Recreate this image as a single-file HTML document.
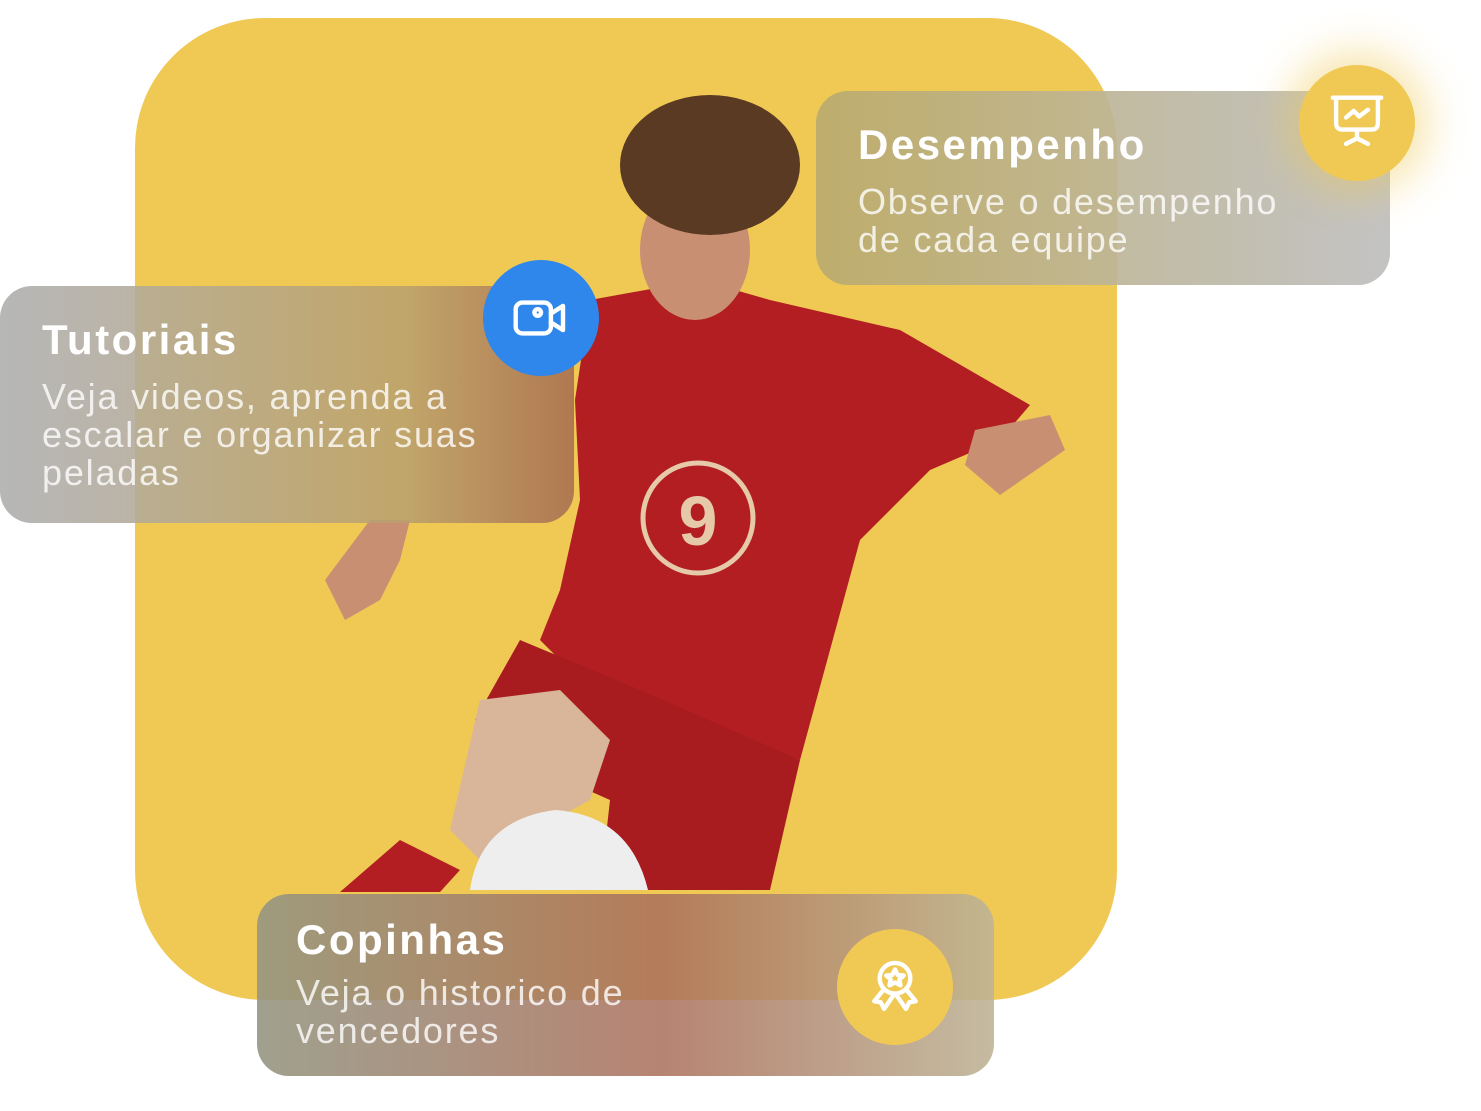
<!DOCTYPE html><html><head><meta charset="utf-8"><style>
body{margin:0;width:1481px;height:1111px;background:#fff;position:relative;overflow:hidden;font-family:"Liberation Sans",sans-serif}
.bg{position:absolute;left:135px;top:18px;width:982px;height:982px;border-radius:130px;background:#F0C955}
.card{position:absolute;border-radius:32px;background:rgba(180,180,180,.82);color:#fff}
.card h2{margin:0;font-size:42px;font-weight:700;letter-spacing:2.5px}
.card p{margin:0;font-size:36px;line-height:38px;color:rgba(255,255,255,.8);letter-spacing:1.8px}
.circ{position:absolute;width:116px;height:116px;border-radius:50%;display:flex;align-items:center;justify-content:center}
</style></head><body>
<div class="bg"></div>
<svg style="position:absolute;left:0;top:0" width="1481" height="1111">
<path d="M590 300 L700 280 L770 300 L900 330 L1030 405 L1000 440 L930 470 L860 540 L800 760 L700 720 L600 700 L540 640 L560 590 L580 500 L575 400 Z" fill="#B21E22"/>
<path d="M520 640 L640 690 L800 760 L770 890 L600 890 L610 800 L520 760 L475 720 Z" fill="#A81C20"/>
<path d="M480 700 L560 690 L610 740 L590 800 L480 860 L450 830 Z" fill="#d9b59a"/>
<path d="M340 892 L400 840 L460 870 L440 892 Z" fill="#B21E22"/>
<path d="M410 520 L370 520 L325 580 L345 620 L380 600 L400 560 Z" fill="#c98f73"/>
<path d="M975 430 L1050 415 L1065 450 L1000 495 L965 465 Z" fill="#c98f73"/>
<ellipse cx="695" cy="250" rx="55" ry="70" fill="#c98f73"/>
<ellipse cx="710" cy="165" rx="90" ry="70" fill="#5a3a22"/>
<path d="M470 890 Q480 820 555 810 Q630 815 648 890 Z" fill="#eee"/>
<circle cx="698" cy="518" r="55" fill="none" stroke="#e6c9a8" stroke-width="5"/>
<text x="698" y="545" text-anchor="middle" font-size="70" font-weight="700" fill="#e6c9a8" font-family="Liberation Sans">9</text>
</svg>
<div class="card" style="left:816px;top:91px;width:574px;height:194px;background:linear-gradient(90deg,rgba(185,170,110,.9),rgba(190,190,190,.92))">
<h2 style="position:absolute;left:42px;top:30px">Desempenho</h2>
<p style="position:absolute;left:42px;top:92px">Observe o desempenho<br>de cada equipe</p></div>
<div class="circ" style="left:1299px;top:65px;background:#F0C955;box-shadow:0 0 40px 15px rgba(240,201,85,.45)">
<svg width="66" height="66" viewBox="0 0 60 60" fill="none" stroke="#fff" stroke-width="4" stroke-linecap="round" stroke-linejoin="round"><path d="M8 7H52M11 7V30Q11 36 17 36H43Q49 36 49 30V7M30 36V44M20 49L30 44L40 49M20 25L27 19L32 24L40 18"/></svg></div>
<div class="card" style="left:0;top:286px;width:574px;height:237px;background:linear-gradient(90deg,rgba(175,175,175,.9),rgba(185,160,110,.85) 70%,rgba(160,100,80,.8))">
<h2 style="position:absolute;left:42px;top:30px">Tutoriais</h2>
<p style="position:absolute;left:42px;top:92px">Veja videos, aprenda a<br>escalar e organizar suas<br>peladas</p></div>
<div class="circ" style="left:483px;top:260px;background:#2F86EB">
<svg width="66" height="66" viewBox="0 0 60 60" fill="none" stroke="#fff" stroke-width="4" stroke-linecap="round" stroke-linejoin="round"><rect x="7" y="16" width="32" height="28" rx="6"/><path d="M39 26L50 19V41L39 34"/><circle cx="27" cy="25" r="3"/></svg></div>
<div class="card" style="left:257px;top:894px;width:737px;height:182px;background:linear-gradient(90deg,rgba(150,150,130,.9),rgba(170,110,90,.85) 55%,rgba(190,180,150,.9))">
<h2 style="position:absolute;left:39px;top:22px">Copinhas</h2>
<p style="position:absolute;left:39px;top:80px">Veja o historico de<br>vencedores</p></div>
<div class="circ" style="left:837px;top:929px;background:#F0C955">
<svg width="70" height="70" viewBox="0 0 64 64" fill="none" stroke="#fff" stroke-width="4" stroke-linecap="round" stroke-linejoin="round"><circle cx="32" cy="24" r="14"/><path d="M32 16L34.5 21L40 21.5L36 25L37 30.5L32 27.8L27 30.5L28 25L24 21.5L29.5 21Z"/><path d="M22 34L13 45L19 46L22 52L31 39M42 34L51 45L45 46L42 52L33 39"/></svg></div>
</body></html>
